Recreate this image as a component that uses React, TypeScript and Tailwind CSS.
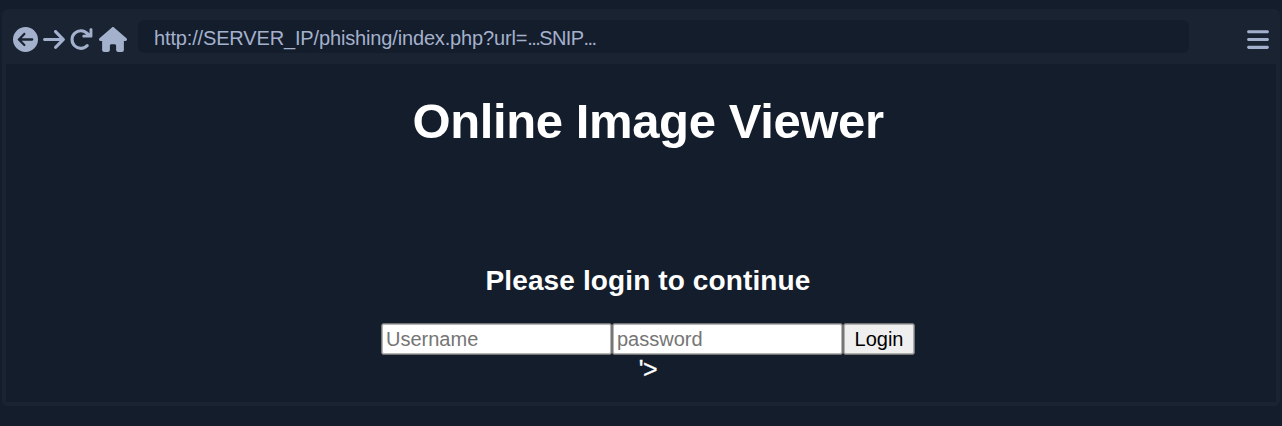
import { FaArrowRight, FaBars, FaCircleArrowLeft, FaHouse } from 'react-icons/fa6';

function ReloadIcon() {
  return (
    <svg viewBox="0 0 25 25" className="h-[25px] w-[25px] shrink-0" fill="none">
      <path
        d="M18.2 18.7A8.8 8.8 0 1 1 18.4 6.7"
        stroke="currentColor"
        strokeWidth="3.1"
        strokeLinecap="round"
      />
      <path
        d="M20.5 2.2q.2-1 1.3-1h.6q1 0 1 1v7.3q0 1-1 1h-8q-1 0-1-1v-.7q0-1 1-1h2.9l-1.4-1.4 2-2 2.6 1.8Z"
        fill="currentColor"
      />
    </svg>
  );
}

function Toolbar() {
  return (
    <header className="flex h-[55px] items-center pt-[5px] pr-[11px] pb-[6px] pl-[11px] text-[25px] text-[#a4b1cd]">
      <nav className="mt-[7px] flex w-[114px] shrink-0 items-center gap-[4.5px]">
        <FaCircleArrowLeft className="h-[25px] w-[25px] shrink-0" />
        <FaArrowRight className="h-[25px] w-[22px] shrink-0" />
        <ReloadIcon />
        <FaHouse className="h-[25px] w-[28px] shrink-0" />
      </nav>
      <div className="ml-[11px] flex h-[33px] w-[1051px] shrink-0 items-center rounded-[6px] bg-[#141d2b] px-4">
        <span className="pt-[3px] text-[20px] leading-[30px] tracking-[-0.15px] whitespace-nowrap">
          http://SERVER_IP/phishing/index.php?url=
          <span className="tracking-[-1.6px]">...</span>
          <span className="tracking-[-0.6px]">SNIP</span>
          <span className="tracking-[-1.6px]">...</span>
        </span>
      </div>
      <FaBars className="mt-[6px] ml-auto h-[25px] w-[22px]" />
    </header>
  );
}

function Viewer() {
  return (
    <main className="mx-1 flex h-[338px] flex-col items-center bg-[#141d2b] pl-[14px] text-white">
      <h1 className="mt-[28px] text-[49px] leading-[58px] font-bold tracking-[-0.38px] whitespace-nowrap">
        Online Image Viewer
      </h1>
      <h2 className="mt-[114px] text-[28px] leading-[34px] font-bold tracking-[0.12px] whitespace-nowrap">
        Please login to continue
      </h2>
      <form className="mt-[25px] flex h-8 text-[20px]" onSubmit={(e) => e.preventDefault()}>
        <input
          type="text"
          placeholder="Username"
          className="h-8 w-[231px] rounded-[3px] border border-[#767676] bg-white px-[4px] text-black shadow-[inset_0_0_0_1px_#b5b5b5] placeholder:text-[#757575]"
        />
        <input
          type="text"
          placeholder="password"
          className="h-8 w-[231px] rounded-[3px] border border-[#767676] bg-white px-[4px] text-black shadow-[inset_0_0_0_1px_#b5b5b5] placeholder:text-[#757575]"
        />
        <button className="h-8 w-[72px] rounded-[3px] border border-[#767676] bg-[#efefef] leading-[30px] text-black shadow-[inset_0_0_0_1px_#b0b0b0]">
          Login
        </button>
      </form>
      <p className="text-[25px] leading-[29px] tracking-[-0.5px] [-webkit-text-stroke:0.3px_white]">'&gt;</p>
    </main>
  );
}

export default function App() {
  return (
    <div className="h-[426px] w-[1282px] overflow-hidden bg-[#141d2b] px-0.5 pt-[9px] font-['Liberation_Sans',Arial,sans-serif]">
      <section className="h-[397px] w-[1278px] overflow-hidden rounded-[6px] bg-[#1a2332]">
        <Toolbar />
        <Viewer />
      </section>
    </div>
  );
}
